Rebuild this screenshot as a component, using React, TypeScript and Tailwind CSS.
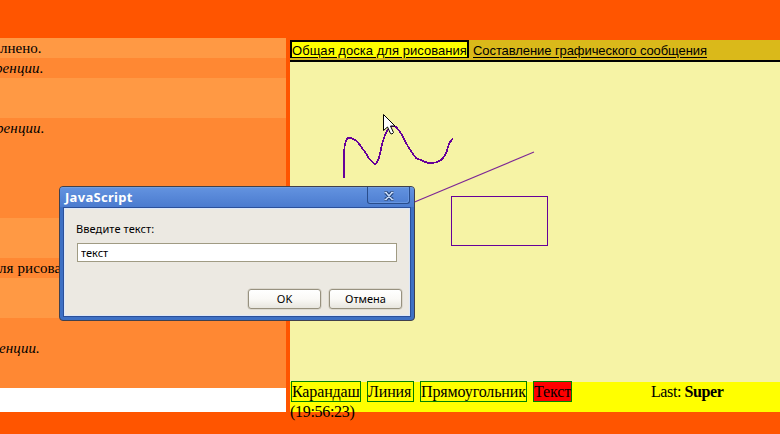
import type { ReactNode } from 'react';

const rows = [
  { box: 'h-[20px] bg-[#ff9944]', text: 'лнено.', style: 'pl-0' },
  { box: 'h-[20px] bg-[#ff8833]', text: 'ренции.', style: 'italic -ml-[5px] tracking-[0.1px]' },
  { box: 'h-[40px] bg-[#ff9944]', text: '', style: '' },
  { box: 'h-[100px] bg-[#ff8833]', text: 'ренции.', style: 'italic -ml-[4px] tracking-[0.1px]' },
  { box: 'h-[40px] bg-[#ff9944]', text: '', style: '' },
  { box: 'h-[20px] bg-[#ff8833]', text: 'ля рисования', style: '-ml-[1px] tracking-[0.1px]' },
  { box: 'h-[40px] bg-[#ff9944]', text: '', style: '' },
  { box: 'h-[70px] bg-[#ff8833] pt-[20px]', text: 'енции.', style: 'italic -ml-px tracking-[0.1px]' },
];

function Tool({ width, children, active = false }: { width: string; children: ReactNode; active?: boolean }) {
  return (
    <button className={`h-[21px] shrink-0 border border-[#008000] text-left leading-[20px] tracking-[-0.13px] whitespace-nowrap ${width} ${active ? 'bg-[#ff0000]' : ''}`}>
      {children}
    </button>
  );
}

function DialogButton({ children }: { children: ReactNode }) {
  return (
    <button className="h-[20px] w-[73px] rounded-[3px] border border-[#97917f] bg-linear-to-b from-white via-[#faf9f6] to-[#e8e6df] text-center leading-[18px] shadow-[0_0_0_0.5px_#c9c5b8]">
      {children}
    </button>
  );
}

export default function App() {
  return (
    <div className="relative flex h-[434px] w-[780px] overflow-hidden bg-[#ff5500] font-['Liberation_Serif',serif] text-black">
      <section className="mt-[38px] flex w-[286px] shrink-0 flex-col overflow-hidden text-[15px] leading-[20px]">
        {rows.map((row, i) => (
          <div key={i} className={`shrink-0 whitespace-nowrap ${row.box}`}>
            <p className={row.style}>{row.text}</p>
          </div>
        ))}
        <div className="h-[24px] bg-white" />
      </section>

      <main className="mt-[40px] ml-[4px] flex w-[490px] shrink-0 flex-col">
        <nav className="flex h-[22px] items-start border-b-2 border-black bg-[#dab91a] font-['Liberation_Sans',sans-serif] text-[13px] leading-[17px] whitespace-nowrap underline underline-offset-2">
          <a className="h-[17.5px] w-[179px] border-2 border-b-0 border-black bg-[#ffff00] tracking-[0.04px]">Общая доска для рисования</a>
          <a className="ml-[4px] pt-[2px] tracking-[-0.08px]">Составление графического сообщения</a>
        </nav>
        <svg className="h-[320px] w-[490px] shrink-0 bg-[#f6f3a5]" viewBox="290 62 490 320" fill="none">
          <g stroke="#660099">
            <path strokeWidth="1.7" d="M344 178V158Q344 139 349 137.5Q356 139 360 145L367 155Q370 161 375 164Q378 163 380 154Q383 138 387 131Q392 123 396 127Q401 132 406 143Q411 152 416 158Q421 160 425 162Q434 165 441 160Q446 156 448 147Q450 141 453 138.5" shapeRendering="crispEdges" />
            <path stroke="#7d2695" strokeWidth="1.1" d="M405 206L534 152" />
            <path strokeWidth="1" shapeRendering="crispEdges" d="M451.5 196.5h96v49h-96z" />
          </g>
          <path fill="white" stroke="black" strokeWidth="1" d="M383.5 114.5V130.5L387.5 127L390.5 133.5Q392 135 393.5 132.5L390.5 126H395z" />
        </svg>
        <footer className="flex h-[30px] items-start bg-[#ffff00] pl-px text-[16px]">
          <div className="-mt-px flex gap-[6px]">
            <Tool width="w-[70px]">Карандаш</Tool>
            <Tool width="w-[47px]">Линия</Tool>
            <Tool width="w-[107px]">Прямоугольник</Tool>
            <Tool width="w-[39px]" active>Текст</Tool>
          </div>
          <p className="-mt-px ml-[79px] leading-[22px] tracking-[-0.4px]">Last: <b>Super</b></p>
        </footer>
        <time className="-mt-[10px] text-[16px] leading-[20px] tracking-[-0.3px]">(19:56:23)</time>
      </main>

      <div role="dialog" className="absolute top-[186px] left-[59px] flex h-[135px] w-[356px] flex-col rounded-[4px] border border-[#40404c] bg-[#3e70c4] px-[3px] pb-[3px] font-['Noto_Sans',sans-serif] text-[11px]">
        <header className="-mx-[3px] flex h-[20px] shrink-0 justify-between rounded-t-[3px] border-t border-[#739fdc] bg-linear-to-b from-[#6292df] to-[#4b7bcf] pr-[4px] pl-[5px]">
          <h1 className="text-[13px] leading-[19px] font-bold tracking-[0.3px] text-white">JavaScript</h1>
          <button className="-mt-px flex h-[17px] w-[43px] justify-center rounded-b-[3px] border border-t-0 border-[#294d8c] shadow-[inset_-1px_-1px_0_#6795df]">
            <svg className="mt-[4px] h-[10px] w-[12px]" viewBox="0 0 12 10" fill="none">
              <path stroke="#203f72" strokeWidth="3.6" d="M1.5 1.5H4M8 1.5h2.500M1.500 8.500H4M8 8.500h2.500M3 1.500l6 7M9 1.500l-6 7" />
              <path stroke="#c8dcfa" strokeWidth="1.6" d="M1.500 1.500H4M8 1.500h2.500M1.500 8.500H4M8 8.500h2.500M3 1.500l6 7M9 1.500l-6 7" />
            </svg>
          </button>
        </header>
        <div className="flex min-h-0 flex-1 flex-col border border-[#2b509a] bg-[#ece9e2] px-[13px] pt-[13px] shadow-[inset_0_0_0_1px_#dde8fa]">
          <label className="-ml-px leading-[16px] tracking-[0.1px]">Введите текст:</label>
          <input readOnly value="текст" className="mt-[6px] h-[19px] w-[320px] shrink-0 border border-[#a09b83] bg-white px-[3px] outline-none" />
          <div className="mt-[27px] -mr-[5px] ml-[171px] flex gap-[8px]">
            <DialogButton>OK</DialogButton>
            <DialogButton>Отмена</DialogButton>
          </div>
        </div>
      </div>
    </div>
  );
}
